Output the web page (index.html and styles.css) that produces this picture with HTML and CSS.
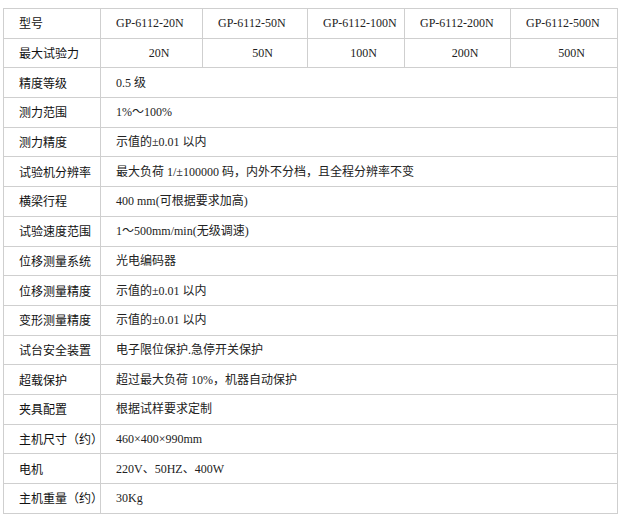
FILE: index.html
```html
<!DOCTYPE html>
<html lang="zh">
<head>
<meta charset="utf-8">
<title>GP-6112 参数</title>
<link rel="stylesheet" href="styles.css">
</head>
<body>
<table class="spec">
  <colgroup>
    <col class="c1"><col class="c2"><col class="c3"><col class="c4"><col class="c5"><col class="c6">
  </colgroup>
  <tr><td class="lbl">型号</td><td>GP-6112-20N</td><td>GP-6112-50N</td><td>GP-6112-100N</td><td>GP-6112-200N</td><td>GP-6112-500N</td></tr>
  <tr><td class="lbl">最大试验力</td><td class="ctr">20N</td><td class="ctr">50N</td><td class="ctr">100N</td><td class="ctr">200N</td><td class="ctr">500N</td></tr>
  <tr><td class="lbl">精度等级</td><td colspan="5">0.5 级</td></tr>
  <tr><td class="lbl">测力范围</td><td colspan="5">1%～100%</td></tr>
  <tr><td class="lbl">测力精度</td><td colspan="5">示值的±0.01 以内</td></tr>
  <tr><td class="lbl">试验机分辨率</td><td colspan="5">最大负荷 1/±100000 码，内外不分档，且全程分辨率不变</td></tr>
  <tr><td class="lbl">横梁行程</td><td colspan="5">400 mm(可根据要求加高)</td></tr>
  <tr><td class="lbl">试验速度范围</td><td colspan="5">1～500mm/min(无级调速)</td></tr>
  <tr><td class="lbl">位移测量系统</td><td colspan="5">光电编码器</td></tr>
  <tr><td class="lbl">位移测量精度</td><td colspan="5">示值的±0.01 以内</td></tr>
  <tr><td class="lbl">变形测量精度</td><td colspan="5">示值的±0.01 以内</td></tr>
  <tr><td class="lbl">试台安全装置</td><td colspan="5">电子限位保护.急停开关保护</td></tr>
  <tr><td class="lbl">超载保护</td><td colspan="5">超过最大负荷 10%，机器自动保护</td></tr>
  <tr><td class="lbl">夹具配置</td><td colspan="5">根据试样要求定制</td></tr>
  <tr><td class="lbl">主机尺寸（约）</td><td colspan="5">460×400×990mm</td></tr>
  <tr><td class="lbl">电机</td><td colspan="5">220V、50HZ、400W</td></tr>
  <tr><td class="lbl">主机重量（约）</td><td colspan="5">30Kg</td></tr>
</table>
</body>
</html>
```
FILE: styles.css
```css
html, body {
  background: #fff;
}
body {
  margin: 8px 0 0 3px;
}
.spec {
  border-collapse: collapse;
  table-layout: fixed;
  width: 614px;
  font-family: "Liberation Serif", "Noto Sans CJK SC", serif;
  font-size: 12px;
  color: #222;
}
.c1 { width: 97px; }
.c2 { width: 102px; }
.c3 { width: 105px; }
.c4 { width: 97px; }
.c5 { width: 106px; }
.c6 { width: 107px; }
.spec tr {
  height: 29.7px;
}
.spec td {
  border: 1px solid #cfcfcf;
  padding: 0 0 0 15px;
  vertical-align: middle;
  white-space: nowrap;
  line-height: 16px;
}
.spec td.lbl {
  font-family: "Noto Sans CJK SC", sans-serif;
  color: #111;
}
.spec td.ctr {
  text-align: center;
}
```
